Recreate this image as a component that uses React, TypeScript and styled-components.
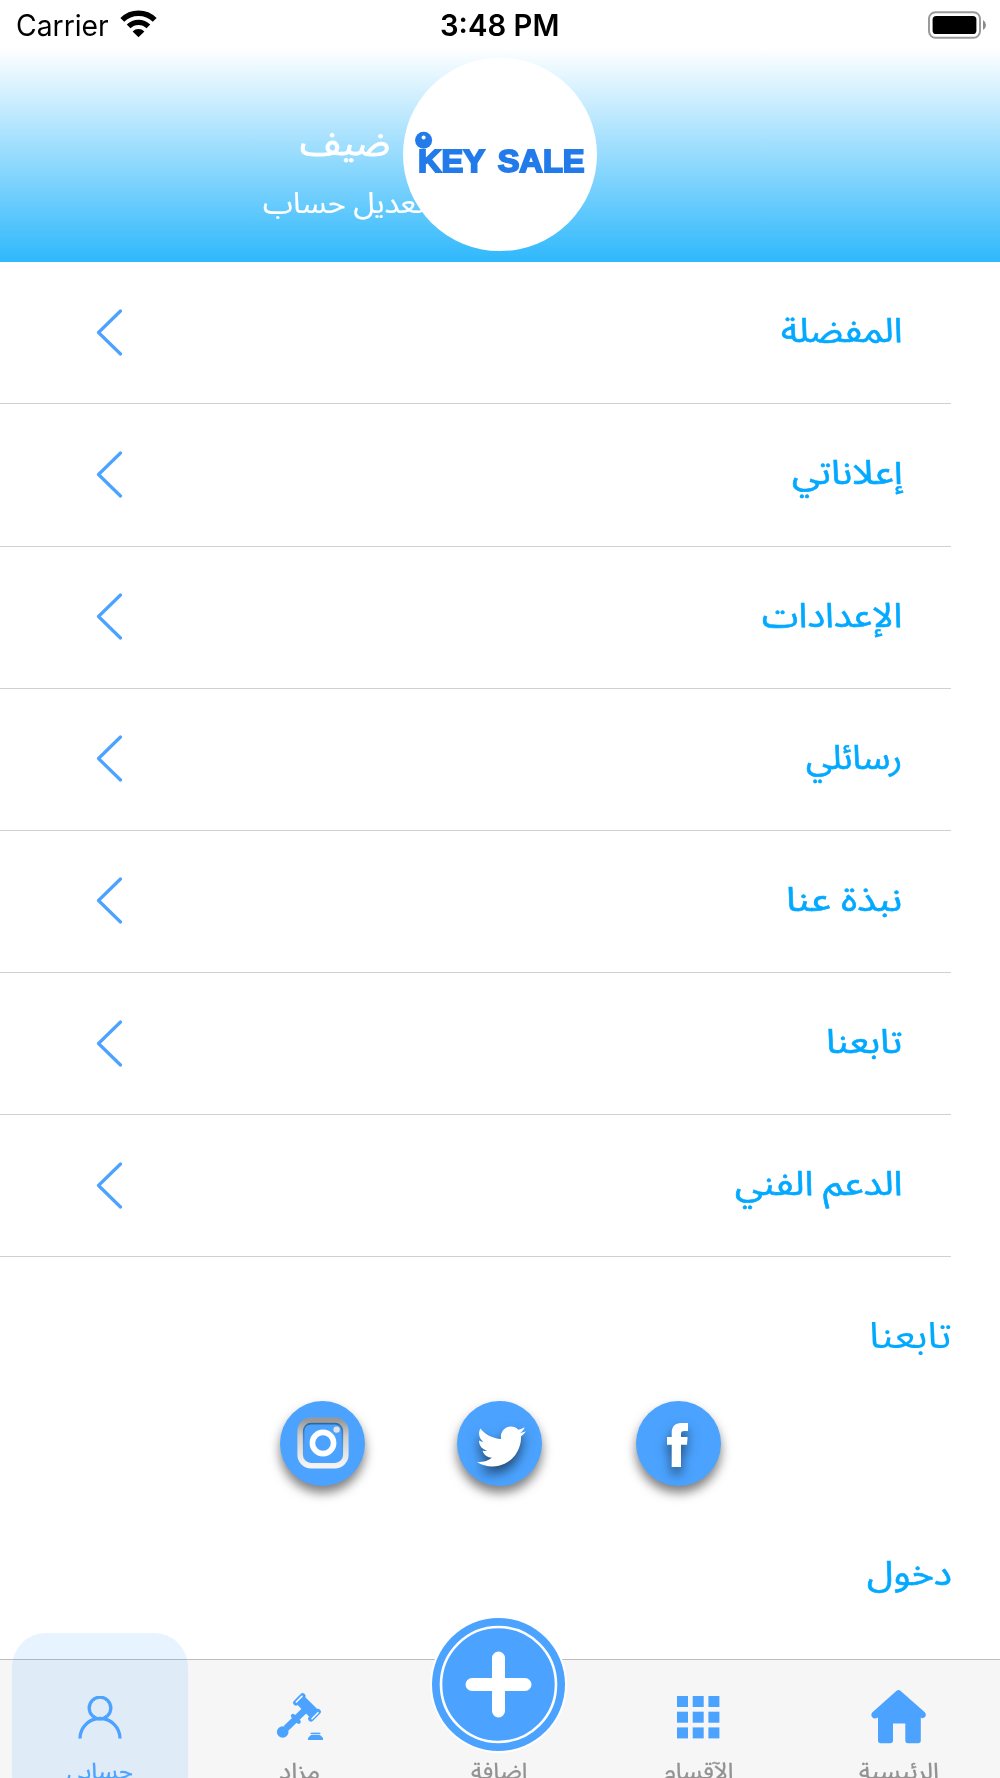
import React, { useLayoutEffect, useRef, useState } from "react";
import styled, { createGlobalStyle } from "styled-components";
import { FaTwitter } from "react-icons/fa";

const BLUE = "#4ba3ff";
const CYAN = "#03a9ff";
const ARABIC = '"Noto Sans Arabic", "DejaVu Sans", sans-serif';

const GlobalStyle = createGlobalStyle`
  html, body { margin: 0; background: #fff; }
  * { box-sizing: border-box; }
`;

const Screen = styled.div`
  width: 1000px;
  height: 1778px;
  overflow: hidden;
  display: flex;
  flex-direction: column;
  background: #fff;
  font-family: ${ARABIC};
`;

const FitOuter = styled.span<{ $w: number }>`
  display: inline-flex;
  justify-content: flex-start;
  width: ${(p) => p.$w}px;
  white-space: nowrap;
  flex: none;
`;

const FitInner = styled.span<{ $rtl: boolean }>`
  display: inline-block;
  flex: none;
  transform-origin: ${(p) => (p.$rtl ? "100% 50%" : "0 50%")};
`;

function Fit({ width, rtl = true, children }: { width: number; rtl?: boolean; children: React.ReactNode }) {
  const ref = useRef<HTMLSpanElement>(null);
  const [scale, setScale] = useState(1);
  useLayoutEffect(() => {
    if (ref.current) setScale(width / ref.current.offsetWidth);
  }, [width]);
  return (
    <FitOuter $w={width} dir={rtl ? "rtl" : "ltr"}>
      <FitInner ref={ref} $rtl={rtl} style={{ transform: `scaleX(${scale})` }}>
        {children}
      </FitInner>
    </FitOuter>
  );
}

const Header = styled.header`
  flex: none;
  height: 262px;
  background: linear-gradient(to bottom, #fff 48px, #2fb8fc 262px);
`;

const StatusBar = styled.div`
  height: 48px;
  display: grid;
  grid-template-columns: 1fr auto 1fr;
  align-items: center;
  padding: 1px 13px 0 16px;
  font-family: Inter, sans-serif;
  font-size: 29.5px;
  line-height: 44px;
  color: #000;
`;

const Carrier = styled.div`
  display: flex;
  align-items: center;
  gap: 11px;
  svg { margin-top: -1px; }
`;

const Clock = styled.div`
  font-weight: 600;
  margin-left: -4px;
`;

const BatterySlot = styled.div`
  display: flex;
  justify-content: flex-end;
`;

const Profile = styled.div`
  display: grid;
  grid-template-columns: 403px 194px 403px;
  height: 214px;
`;

const Names = styled.div`
  display: flex;
  flex-direction: column;
  align-items: flex-end;
  color: #fff;
`;

const GuestName = styled.div`
  margin: 66px 13px 0 0;
  height: 60px;
  line-height: 60px;
  font-size: 35px;
  -webkit-text-stroke: 0.9px #fff;
`;

const EditLink = styled.div`
  margin: 5px -23px 0 0;
  height: 50px;
  line-height: 50px;
  font-size: 29px;
  -webkit-text-stroke: 0.2px #fff;
`;

const Avatar = styled.div`
  position: relative;
  margin-top: 10px;
  width: 193.5px;
  height: 193px;
  border-radius: 50%;
  background: #fff;
  display: flex;
  flex-direction: column;
  align-items: flex-start;
  padding: 72px 0 0 12px;
`;

const KeyRing = styled.svg`
  display: block;
  flex: none;
`;

const Brand = styled.div`
  margin: -4px 0 0 3px;
  font: bold 31px/31px "Liberation Sans", Arial, sans-serif;
  word-spacing: 4px;
  color: #237bea;
  -webkit-text-stroke: 1.9px #237bea;
`;

const Menu = styled.nav`
  flex: none;
  display: flex;
  flex-direction: column;
  padding-top: 0.2px;
`;

const MenuRow = styled.a`
  display: flex;
  align-items: center;
  justify-content: space-between;
  width: 951.4px;
  height: 142.17px;
  padding: 0 49px 0 96px;
  border-bottom: 1.4px solid #d0d0d0;
`;

const MenuLabel = styled.span`
  font-size: 34px;
  line-height: 60px;
  margin-top: -3px;
  color: ${CYAN};
  -webkit-text-stroke: 0.6px ${CYAN};
`;

const Section = styled.div<{ $top: number; $bold?: boolean }>`
  display: flex;
  justify-content: flex-end;
  width: 952px;
  height: 60px;
  margin-top: ${(p) => p.$top}px;
  flex: none;
  font-size: ${(p) => (p.$bold ? 34 : 37)}px;
  line-height: 60px;
  color: ${CYAN};
  -webkit-text-stroke: ${(p) => (p.$bold ? 0.6 : 0.1)}px ${CYAN};
`;

const Social = styled.div`
  flex: none;
  display: grid;
  grid-template-columns: 177px 179px 85px;
  margin: 34.3px 0 0 280px;
`;

const SocialButton = styled.button`
  width: 85px;
  height: 85px;
  padding: 0;
  border: 0;
  border-radius: 50%;
  background: ${BLUE};
  color: #fff;
  display: flex;
  align-items: center;
  justify-content: center;
  box-shadow: 0 7px 11px rgba(0, 0, 0, 0.5);
`;

const Raised = styled.span<{ $dx?: number; $dy: number }>`
  display: flex;
  margin: ${(p) => p.$dy}px 0 0 ${(p) => p.$dx ?? 0}px;
  filter: drop-shadow(0 7px 6px rgba(0, 0, 0, 0.55));
`;

const TabBar = styled.footer`
  flex: none;
  height: 119px;
  margin-top: auto;
  display: grid;
  grid-template-columns: repeat(5, 200px);
  border-top: 1.5px solid #bdbdc0;
  background: #f6f6f6;
`;

const Tab = styled.div<{ $active?: boolean; $shift?: number }>`
  position: relative;
  display: flex;
  flex-direction: column;
  align-items: center;
  padding-right: ${(p) => p.$shift ?? 0}px;
  color: ${(p) => (p.$active ? BLUE : "#929292")};
  font-size: 23px;
  -webkit-text-stroke: 0.3px currentColor;
`;

const TabIcon = styled.div`
  height: 88px;
  display: flex;
  align-items: flex-end;
  justify-content: center;
`;

const TabLabel = styled.div`
  height: 46px;
  margin-top: 0.6px;
  line-height: 46px;
`;

const ActivePad = styled.div`
  position: absolute;
  left: 12px;
  top: -27px;
  width: 176px;
  height: 176px;
  border-radius: 34px;
  background: rgba(75, 163, 255, 0.135);
`;

const AddButton = styled.button`
  position: absolute;
  left: 30px;
  top: -44px;
  width: 137px;
  height: 137px;
  padding: 0;
  border: 0;
  background: none;
  svg { display: block; }
`;

const items: [string, number][] = [
  ["المفضلة", 121],
  ["إعلاناتي", 111],
  ["الإعدادات", 140],
  ["رسائلي", 96],
  ["نبذة عنا", 116],
  ["تابعنا", 76],
  ["الدعم الفني", 168],
];

const gridCells = [0, 15.7, 31.4];

const Chevron = () => (
  <svg width="27" height="48" viewBox="0 0 27 48" fill="none" stroke={BLUE} strokeWidth="3.2" strokeLinecap="round" strokeLinejoin="round">
    <path d="M24.5 2 L2.5 23.5 L24.5 45" />
  </svg>
);

const GavelIcon = () => (
  <svg width="60" height="63" viewBox="0 0 180 189" fill={BLUE}>
    <circle cx="38" cy="141" r="17.5" />
    <path d="M48 130L104 76" stroke={BLUE} strokeWidth="20" />
    <path d="M69 93L86 110" stroke={BLUE} strokeWidth="13" strokeLinecap="round" />
    <path d="M93 47L133 87" stroke={BLUE} strokeWidth="33" />
    <path d="M78 53L98 33" stroke={BLUE} strokeWidth="17" strokeLinecap="round" />
    <path d="M79 51L96 34" stroke="#fff" strokeWidth="4.5" strokeLinecap="round" />
    <path d="M123 101L144 80" stroke={BLUE} strokeWidth="17" strokeLinecap="round" />
    <path d="M126 101L144 83" stroke="#fff" strokeWidth="4.5" strokeLinecap="round" />
    <path d="M122 145H151" stroke={BLUE} strokeWidth="4" />
    <path d="M114 165V159Q121 150 125 149H148Q152 150 159 159V165Z" />
  </svg>
);

const GridIcon = () => (
  <svg width="43" height="52.5" viewBox="0 0 43 52.5" fill={BLUE}>
    {gridCells.map((y) => gridCells.map((x) => <rect key={`${x}-${y}`} x={x} y={y} width="11" height="11" />))}
  </svg>
);

const HomeIcon = () => (
  <svg width="55" height="58" viewBox="0 0 55 58" fill={BLUE}>
    <path d="M25.3 1Q27.5 -.8 29.7 1L53.8 22.2Q55.6 24.4 54.2 26.8Q52 29.2 49.8 27.6V50.5Q49.8 53.3 47 53.3H37Q34.3 53.3 34.3 50.5V33.5H22V50.5Q22 53.3 19.2 53.3H9.8Q7 53.3 7 50.5V27.6Q3.4 29.6 1.2 27.2Q-.6 24.6 1.2 22.4Z" />
  </svg>
);

export default function App() {
  return (
    <Screen>
      <GlobalStyle />
      <Header>
        <StatusBar>
          <Carrier>
            <Fit width={93} rtl={false}>Carrier</Fit>
            <svg width="37" height="28" viewBox="0 0 37 28">
              <path d="M2.3 9.9 A23 23 0 0 1 34.7 9.9" fill="none" stroke="#000" strokeWidth="5.4" />
              <path d="M8.6 16.4 A14 14 0 0 1 28.4 16.4" fill="none" stroke="#000" strokeWidth="5.2" />
              <path d="M18.5 27.2 L12.6 21.4 A8.4 8.4 0 0 1 24.4 21.4 Z" />
            </svg>
          </Carrier>
          <Clock>
            <Fit width={119} rtl={false}>3:48 PM</Fit>
          </Clock>
          <BatterySlot>
            <svg width="60" height="28" viewBox="0 0 60 28">
              <rect x="2" y="1.2" width="51" height="25.6" rx="6.5" fill="#fff" stroke="#9a9a9a" strokeWidth="2" />
              <rect x="5.6" y="5" width="43.8" height="18" rx="3.6" />
              <path d="M56 9 Q59 11 59 14 Q59 17 56 19 Z" fill="#8a8a8a" />
            </svg>
          </BatterySlot>
        </StatusBar>
        <Profile>
          <Names>
            <GuestName><Fit width={90}>ضيف</Fit></GuestName>
            <EditLink><Fit width={163}>تعديل حساب</Fit></EditLink>
          </Names>
          <Avatar>
            <KeyRing width="19" height="20" viewBox="0 0 19 20">
              <circle cx="8.6" cy="10.2" r="8.5" fill="#237bea" />
              <circle cx="8.6" cy="7.5" r="2" fill="#fff" />
            </KeyRing>
            <Brand><Fit width={166} rtl={false}>KEY SALE</Fit></Brand>
          </Avatar>
        </Profile>
      </Header>

      <Menu>
        {items.map(([label, width]) => (
          <MenuRow key={label}>
            <Chevron />
            <MenuLabel><Fit width={width}>{label}</Fit></MenuLabel>
          </MenuRow>
        ))}
      </Menu>

      <Section $top={49}><Fit width={83}>تابعنا</Fit></Section>

      <Social>
        <SocialButton aria-label="Instagram">
          <svg width="52" height="52" viewBox="0 0 52 52" fill="none">
            <defs>
              <linearGradient id="frame" x1="0" y1="0" x2="0" y2="1">
                <stop offset="0" stopColor="#999" />
                <stop offset="0.35" stopColor="#cfcfcf" />
                <stop offset="1" stopColor="#f4f4f4" />
              </linearGradient>
              <linearGradient id="inset" x1="0" y1="0" x2="0" y2="1">
                <stop offset="0" stopColor="#2f5f92" stopOpacity="0.9" />
                <stop offset="0.6" stopColor="#5f8fc4" stopOpacity="0.6" />
                <stop offset="1" stopColor="#4ba3ff" stopOpacity="0.1" />
              </linearGradient>
            </defs>
            <rect x="3.2" y="3.2" width="45.6" height="45.6" rx="11" stroke="url(#frame)" strokeWidth="5.6" />
            <rect x="6.6" y="6.6" width="38.8" height="38.8" rx="7.5" stroke="url(#inset)" strokeWidth="1.6" />
            <circle cx="26" cy="26" r="10.6" stroke="#fff" strokeWidth="5.6" />
            <circle cx="39.6" cy="12.6" r="3.2" fill="#e3e3e3" />
          </svg>
        </SocialButton>
        <SocialButton aria-label="Twitter">
          <Raised $dy={6} $dx={3}><FaTwitter size={49} /></Raised>
        </SocialButton>
        <SocialButton aria-label="Facebook">
          <Raised $dy={4} $dx={-2}>
            <svg width="21" height="44" viewBox="0 0 21 44" fill="#fff">
              <path d="M4.7 44V21.7H0V14H4.7V10C4.7 3.5 8 0 14 0H21V8H17.2C14.7 8 14 9 14 11V14H20.6L20 21.7H14V44Z" />
            </svg>
          </Raised>
        </SocialButton>
      </Social>

      <Section $top={58} $bold><Fit width={85}>دخول</Fit></Section>

      <TabBar>
        <Tab $active>
          <ActivePad />
          <TabIcon>
            <svg width="44" height="52" viewBox="0 0 44 52" fill="none" stroke={BLUE} strokeWidth="3.3">
              <circle cx="22" cy="12" r="10.8" />
              <path d="M2 42.5A20 20 0 0 1 42 42.5" />
            </svg>
          </TabIcon>
          <TabLabel><Fit width={66}>حسابي</Fit></TabLabel>
        </Tab>
        <Tab>
          <TabIcon><GavelIcon /></TabIcon>
          <TabLabel><Fit width={41}>مزاد</Fit></TabLabel>
        </Tab>
        <Tab $shift={2}>
          <AddButton aria-label="add">
            <svg width="137" height="137" viewBox="0 0 137 137">
              <circle cx="68.5" cy="68.5" r="68.5" fill="#fff" />
              <circle cx="68.5" cy="68.5" r="66.5" fill={BLUE} />
              <circle cx="68.5" cy="68.5" r="57.5" fill="none" stroke="#fff" strokeWidth="2.6" />
              <path d="M68.5 42V95M42 68.5H95" stroke="#fff" strokeWidth="13" strokeLinecap="round" />
            </svg>
          </AddButton>
          <TabIcon />
          <TabLabel><Fit width={56}>اضافة</Fit></TabLabel>
        </Tab>
        <Tab $shift={3}>
          <TabIcon><GridIcon /></TabIcon>
          <TabLabel><Fit width={70}>الآقسام</Fit></TabLabel>
        </Tab>
        <Tab $shift={3}>
          <TabIcon><HomeIcon /></TabIcon>
          <TabLabel><Fit width={80}>الرئيسية</Fit></TabLabel>
        </Tab>
      </TabBar>
    </Screen>
  );
}
